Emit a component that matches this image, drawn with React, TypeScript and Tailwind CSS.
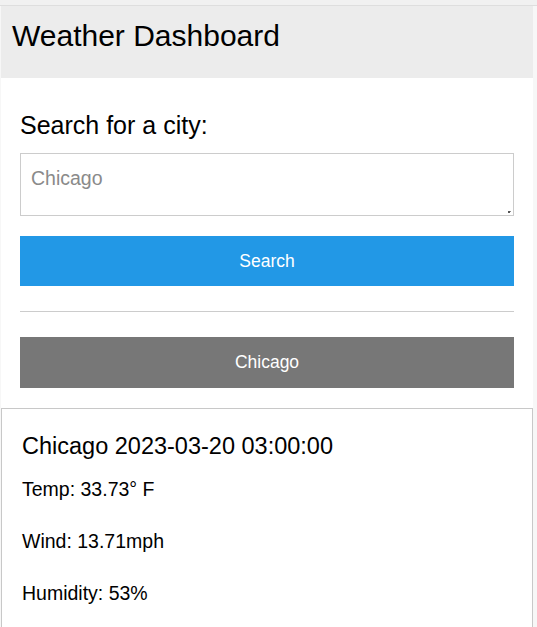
import React from "react";

export default function App() {
  return (
    <div
      className="min-h-screen bg-[#f7f7f7]"
      style={{ fontFamily: '"Liberation Sans", Arial, sans-serif' }}
    >
      <div className="h-[5px] bg-[#f1f1f1]" />
      <div className="h-[1px] bg-[#dedede]" />
      <div className="ml-[1px] w-[532px] bg-white min-h-[621px]">
        <header className="h-[72px] bg-[#ececec] pl-[11px] pt-[12px]">
          <h1 className="text-[30px] leading-[36px] text-black">Weather Dashboard</h1>
        </header>
        <section className="px-[19px] pt-[32px]">
          <label className="block text-[25px] leading-[30px] text-black">Search for a city:</label>
          <div className="relative mt-[13px]">
            <textarea
              placeholder="Chicago"
              className="block h-[63px] w-full resize-none border border-[#cccccc] bg-white px-[10px] pt-[13px] text-[19.5px] leading-[23px] text-black placeholder:text-[#8a8a8a] outline-none"
            />
            <span className="absolute bottom-[3px] right-[4px] h-[2px] w-[2px] bg-[#555555]" />
            <span className="absolute bottom-[4px] right-[3px] h-[1px] w-[1px] bg-[#888888]" />
          </div>
          <button className="mt-[20px] block h-[50px] w-full bg-[#2298e6] text-[17.5px] text-white">
            Search
          </button>
          <div className="mt-[25px] h-[1px] bg-[#cccccc]" />
          <button className="mt-[25px] block h-[51px] w-full bg-[#777777] text-[17.5px] text-white">
            Chicago
          </button>
        </section>
        <div className="mt-[20px] border border-[#c8c8c8] px-[20px] pt-[23px] pb-[40px]">
          <h2 className="text-[23.5px] leading-[28px] text-black">Chicago 2023-03-20 03:00:00</h2>
          <p className="mt-[18px] text-[19.5px] leading-[22px] text-black">Temp: 33.73° F</p>
          <p className="mt-[30px] text-[19.5px] leading-[22px] text-black">Wind: 13.71mph</p>
          <p className="mt-[30px] text-[19.5px] leading-[22px] text-black">Humidity: 53%</p>
        </div>
      </div>
    </div>
  );
}
